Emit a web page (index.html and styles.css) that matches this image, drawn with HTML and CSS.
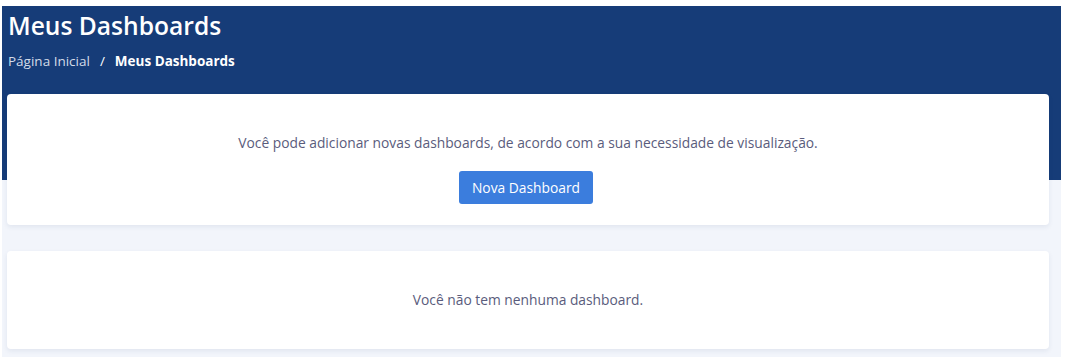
FILE: index.html
```html
<!DOCTYPE html>
<html lang="pt-BR">
<head>
<meta charset="utf-8">
<title>Meus Dashboards</title>
<link rel="stylesheet" href="styles.css">
</head>
<body>
<div class="page">
  <header class="hero">
    <h1 class="title">Meus Dashboards</h1>
    <nav class="breadcrumb">
      <span class="crumb">Página Inicial</span>
      <span class="sep">/</span>
      <span class="crumb current">Meus Dashboards</span>
    </nav>
  </header>
  <main class="content">
    <section class="card intro">
      <p class="text">Você pode adicionar novas dashboards, de acordo com a sua necessidade de visualização.</p>
      <button class="btn">Nova Dashboard</button>
    </section>
    <section class="card empty">
      <p class="text">Você não tem nenhuma dashboard.</p>
    </section>
  </main>
</div>
</body>
</html>
```
FILE: styles.css
```css
html, body {
  margin: 0;
  padding: 0;
  background: #ffffff;
}
body {
  font-family: "Open Sans", "Noto Sans", sans-serif;
  padding: 6px 7px 0 2px;
}
.page {
  background: #f2f5fb;
  height: 351px;
  position: relative;
}
.hero {
  background: #163c78;
  height: 174px;
  padding: 4px 6px 0 6px;
  box-sizing: border-box;
  color: #ffffff;
}
.title {
  margin: 0;
  font-size: 24.6px;
  font-weight: 600;
  line-height: 32px;
  letter-spacing: 0;
}
.breadcrumb {
  margin-top: 10px;
  font-size: 13.5px;
  line-height: 18px;
  display: flex;
  gap: 10px;
  color: #d3dbe8;
}
.crumb.current {
  color: #ffffff;
  font-weight: 700;
}
.sep {
  color: #ffffff;
}
.content {
  margin-top: -86px;
  padding: 0 12px 0 5px;
  display: flex;
  flex-direction: column;
  gap: 26px;
}
.card {
  background: #ffffff;
  border-radius: 4px;
  box-shadow: 0 2px 5px rgba(30, 50, 100, 0.08);
  display: flex;
  flex-direction: column;
  align-items: center;
  color: #5a5c7c;
  font-size: 13.8px;
}
.text {
  margin: 0;
  line-height: 18px;
}
.intro {
  height: 131px;
  padding-top: 40px;
  box-sizing: border-box;
}
.btn {
  margin-top: 19px;
  margin-right: 4px;
  width: 134px;
  height: 33px;
  background: #3b7ddd;
  color: #ffffff;
  border: none;
  border-radius: 3px;
  font-family: inherit;
  font-size: 13.8px;
  padding: 0;
}
.empty {
  height: 98px;
  justify-content: center;
}
```
